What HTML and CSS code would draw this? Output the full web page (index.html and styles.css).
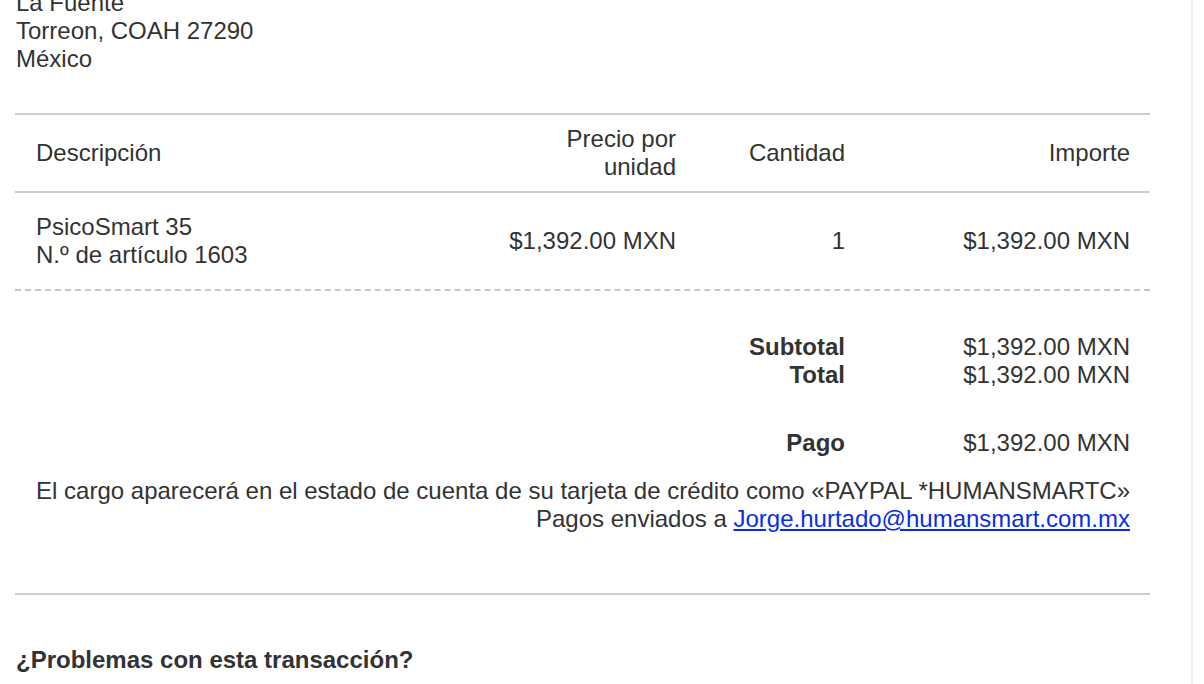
FILE: index.html
```html
<!DOCTYPE html>
<html lang="es">
<head>
<meta charset="utf-8">
<link rel="stylesheet" href="styles.css">
</head>
<body>
<div class="frame">
  <div class="main">
    <div class="address">
      <div>La Fuente</div>
      <div>Torreon, COAH 27290</div>
      <div>México</div>
    </div>

    <div class="rule"></div>

    <div class="grid head">
      <div class="cell left">Descripción</div>
      <div class="cell right">Precio por<br>unidad</div>
      <div class="cell right">Cantidad</div>
      <div class="cell right">Importe</div>
    </div>

    <div class="rule"></div>

    <div class="grid item">
      <div class="cell left">PsicoSmart 35<br>N.º de artículo 1603</div>
      <div class="cell right">$1,392.00 MXN</div>
      <div class="cell right">1</div>
      <div class="cell right">$1,392.00 MXN</div>
    </div>

    <div class="dashed"></div>

    <div class="grid totals">
      <div class="cell"></div>
      <div class="cell"></div>
      <div class="cell right bold">Subtotal<br>Total</div>
      <div class="cell right">$1,392.00 MXN<br>$1,392.00 MXN</div>
    </div>

    <div class="grid payment">
      <div class="cell"></div>
      <div class="cell"></div>
      <div class="cell right bold">Pago</div>
      <div class="cell right">$1,392.00 MXN</div>
    </div>

    <div class="note">
      <div>El cargo aparecerá en el estado de cuenta de su tarjeta de crédito como «PAYPAL *HUMANSMARTC»</div>
      <div>Pagos enviados a <a href="#">Jorge.hurtado@humansmart.com.mx</a></div>
    </div>

    <div class="rule"></div>

    <h2 class="problems">¿Problemas con esta transacción?</h2>
  </div>
  <div class="side"></div>
</div>
</body>
</html>
```

FILE: styles.css
```css
html, body {
  margin: 0;
  padding: 0;
  background: #ffffff;
  overflow: hidden;
}

body {
  font-family: "Liberation Sans", Arial, Helvetica, sans-serif;
  font-size: 24px;
  line-height: 28px;
  color: #333333;
}

.frame {
  display: flex;
  width: 1204px;
  height: 684px;
}

.main {
  width: 1176px;
  padding-left: 15px;
  border-right: 2px solid #efefef;
  box-sizing: content-box;
  flex: none;
}

.side {
  flex: 1;
}

.address {
  margin-top: -11px;
  padding-left: 1px;
}

.rule {
  width: 1135px;
  height: 2px;
  background: #cccccc;
}

.address + .rule {
  margin-top: 40px;
}

.grid {
  display: grid;
  grid-template-columns: 473px 208px 169px 285px;
  width: 1135px;
}

.cell {
  padding: 0 20px;
}

.cell.left {
  padding-left: 21px;
  text-align: left;
}

.cell.right {
  text-align: right;
}

.bold {
  font-weight: bold;
}

.head {
  height: 76px;
  align-items: center;
}

.item {
  height: 96px;
  align-items: center;
}

.dashed {
  width: 1135px;
  height: 0;
  border-top: 2px dashed #c8c8c8;
}

.totals {
  padding-top: 42px;
}

.payment {
  padding-top: 40px;
}

.note {
  width: 1115px;
  text-align: right;
  padding-top: 20px;
}

.note a {
  color: #0a2ee6;
  text-decoration: underline;
}

.note + .rule {
  margin-top: 60px;
}

.problems {
  margin: 51px 0 0 0;
  padding-left: 1px;
  font-size: 24px;
  line-height: 28px;
  font-weight: bold;
  color: #333333;
}
```
